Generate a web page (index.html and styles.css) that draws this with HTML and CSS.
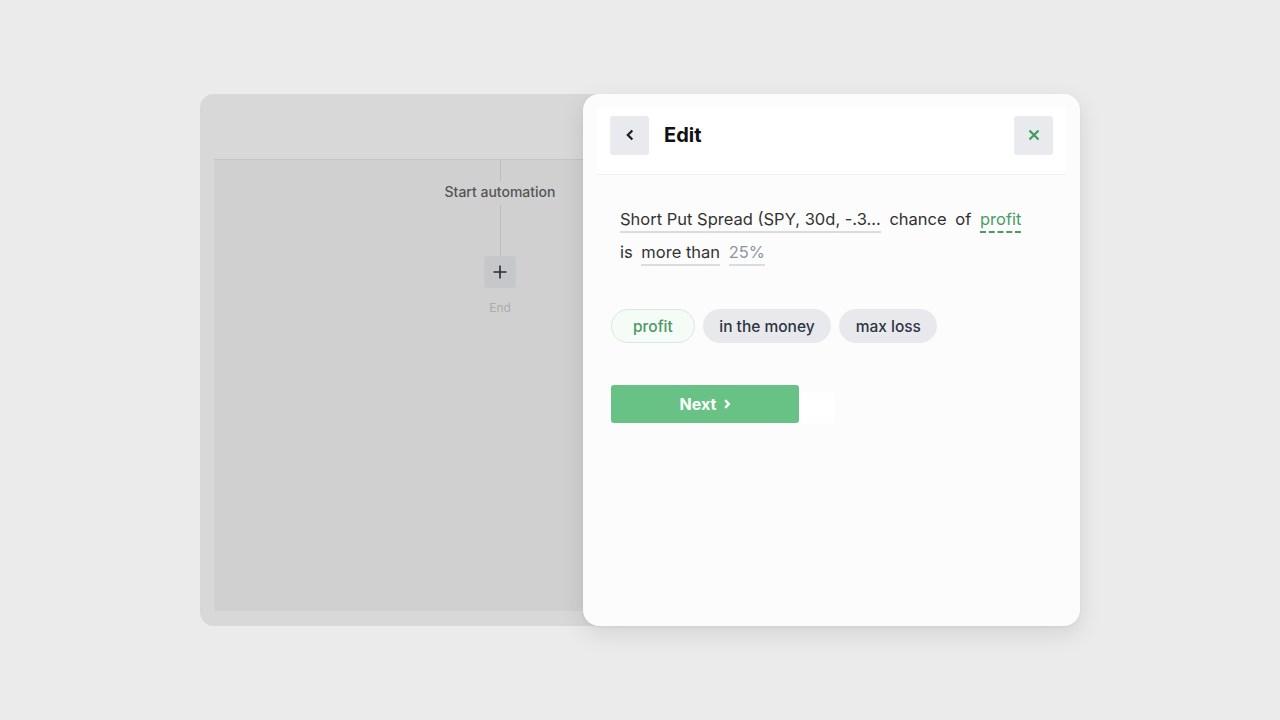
FILE: index.html
```html
<!DOCTYPE html>
<html>
<head>
<meta charset="utf-8">
<link rel="stylesheet" href="styles.css">
</head>
<body>
<div class="stage">
  <div class="backcard">
    <div class="back-head"></div>
    <div class="canvas">
      <div class="flow">
        <div class="vline short"></div>
        <div class="node-title">Start automation</div>
        <div class="vline long"></div>
        <div class="addbtn">
          <svg width="16" height="16" viewBox="0 0 16 16"><path d="M8 1.5v13M1.5 8h13" stroke="#2c2c2c" stroke-width="1.6" fill="none"/></svg>
        </div>
        <div class="end">End</div>
      </div>
    </div>
  </div>
  <div class="panel">
    <div class="panel-head">
      <button class="iconbtn">
        <svg width="14" height="14" viewBox="0 0 14 14"><path d="M8.6 3.2L4.8 7l3.8 3.8" stroke="#1d1d1d" stroke-width="2.2" fill="none" stroke-linecap="square"/></svg>
      </button>
      <div class="title">Edit</div>
      <button class="iconbtn close">
        <svg width="14" height="14" viewBox="0 0 14 14"><path d="M2.5 2.5l9 9M11.5 2.5l-9 9" stroke="#3e9c5e" stroke-width="2.2" fill="none"/></svg>
      </button>
    </div>
    <div class="panel-body">
      <div class="sentence">
        <span class="field">Short Put Spread (SPY, 30d, -.3...</span>
        <span class="word">chance</span>
        <span class="word">of</span>
        <span class="field green">profit</span><br>
        <span class="word">is</span>
        <span class="field">more than</span>
        <span class="field muted">25%</span>
      </div>
      <div class="chips">
        <span class="chip active">profit</span>
        <span class="chip">in the money</span>
        <span class="chip">max loss</span>
      </div>
      <div class="actions">
        <button class="next">Next
          <svg width="10" height="12" viewBox="0 0 10 12"><path d="M3.2 2.2L6.8 6 3.2 9.8" stroke="#fff" stroke-width="2.4" fill="none"/></svg>
        </button>
        <div class="ghost"></div>
      </div>
    </div>
  </div>
</div>
</body>
</html>
```
FILE: styles.css
```css
* { box-sizing: border-box; }
html, body { margin: 0; padding: 0; }
body {
  width: 1280px;
  height: 720px;
  background: #ebebeb;
  font-family: Inter, "Noto Sans", sans-serif;
  overflow: hidden;
}
.stage {
  display: flex;
  padding: 94px 0 0 200px;
}
.backcard {
  width: 520px;
  height: 532px;
  background: #d8d8d8;
  border-radius: 14px;
  padding: 0 14px 15px 14px;
  display: flex;
  flex-direction: column;
  flex-shrink: 0;
}
.back-head {
  height: 66px;
  border-bottom: 1px solid #c5c5c5;
}
.canvas {
  flex: 1;
  background: #d0d0d0;
}
.flow {
  width: 300px;
  margin-left: 136px;
  display: flex;
  flex-direction: column;
  align-items: center;
}
.vline { width: 1px; background: #bcbcbc; }
.vline.short { height: 21px; }
.vline.long { height: 51px; }
.node-title {
  font-size: 14px;
  font-weight: 500;
  color: #555;
  line-height: 20px;
  margin: 1px 0 3px;
}
.addbtn {
  width: 32px;
  height: 32px;
  border-radius: 4px;
  background: #c6c7cb;
  display: flex;
  align-items: center;
  justify-content: center;
}
.end {
  font-size: 12px;
  color: #acacac;
  margin-top: 12px;
}
.panel {
  margin-left: -137px;
  width: 497px;
  height: 532px;
  background: #fcfcfc;
  border-radius: 16px;
  box-shadow: 0 8px 24px rgba(0,0,0,0.10), 0 1px 3px rgba(0,0,0,0.05);
  padding: 14px 14px;
  position: relative;
}
.panel-head {
  height: 67px;
  background: #fff;
  border-bottom: 1px solid #f0f0f0;
  display: flex;
  align-items: center;
  padding: 0 13px 12px 13px;
}
.iconbtn {
  width: 39px;
  height: 39px;
  border: none;
  border-radius: 3px;
  background: #e9eaed;
  display: flex;
  align-items: center;
  justify-content: center;
  padding: 0;
}
.title {
  font-size: 20px;
  font-weight: 700;
  color: #111;
  margin-left: 15px;
  flex: 1;
}
.panel-body {
  padding: 28px 14px 0 14px;
}
.sentence {
  font-size: 16.5px;
  color: #2f2f2f;
  line-height: 33px;
  padding: 0 9px;
}
.word { margin-right: 4px; }
.field {
  border-bottom: 2px solid #dcdcdc;
  padding-bottom: 2px;
  margin-right: 4px;
  color: #333;
}
.field.green {
  color: #4a9c64;
  border-bottom: 2px dashed #4a9c64;
}
.field.muted { color: #8d95a4; }
.chips {
  display: flex;
  gap: 8px;
  margin-top: 40px;
}
.chip {
  height: 34px;
  border-radius: 17px;
  padding: 0 16.5px;
  display: flex;
  align-items: center;
  background: #e8e9ed;
  color: #2e3443;
  font-size: 15.5px;
  font-weight: 500;
}
.chip.active {
  background: #f5fbf7;
  border: 1px solid #d4ebdc;
  color: #4a9a63;
  padding: 0 21px;
}
.actions {
  display: flex;
  align-items: flex-end;
  margin-top: 42px;
}
.next {
  width: 188px;
  height: 38px;
  border: none;
  border-radius: 3px;
  background: #68c285;
  color: #fff;
  font-family: inherit;
  font-size: 16px;
  font-weight: 700;
  display: flex;
  align-items: center;
  justify-content: center;
  gap: 6px;
  padding: 0 0 0 2px;
  margin: 0;
}
.ghost {
  width: 36px;
  height: 30px;
  background: #fff;
}
```
